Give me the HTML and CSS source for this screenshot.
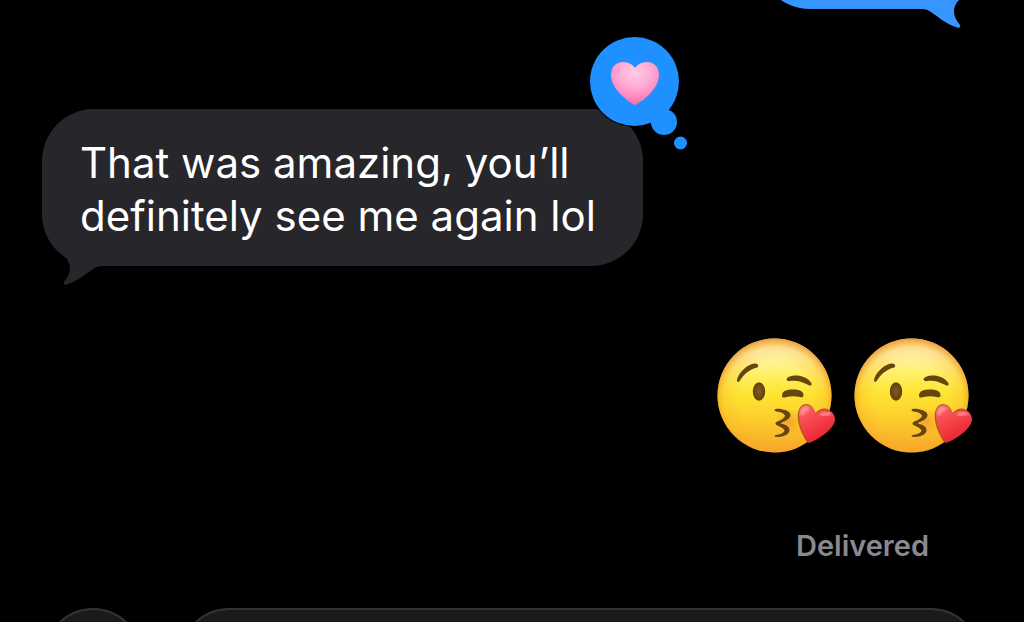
FILE: index.html
```html
<!DOCTYPE html>
<html lang="en">
<head>
    <meta charset="UTF-8">
    <meta name="viewport" content="width=device-width, initial-scale=1.0">
    <title>Messages</title>
    <link rel="stylesheet" href="styles.css">
</head>
<body>
    <!-- shared shapes -->
    <svg class="defs" aria-hidden="true">
        <defs>
            <linearGradient id="faceFill" x1="0" y1="0" x2="0" y2="1">
                <stop offset="0" stop-color="#fff0a8"/>
                <stop offset="0.12" stop-color="#fff6b8"/>
                <stop offset="0.3" stop-color="#ffef6a"/>
                <stop offset="0.48" stop-color="#fee531"/>
                <stop offset="0.75" stop-color="#fdc82c"/>
                <stop offset="1" stop-color="#f6a72b"/>
            </linearGradient>
            <radialGradient id="faceEdge" cx="0.5" cy="0.53" r="0.53">
                <stop offset="0.6" stop-color="#f7a325" stop-opacity="0"/>
                <stop offset="0.85" stop-color="#f7a325" stop-opacity="0.25"/>
                <stop offset="1" stop-color="#ec8e24" stop-opacity="0.85"/>
            </radialGradient>
            <radialGradient id="blush" cx="0.5" cy="0.5" r="0.5">
                <stop offset="0" stop-color="#f58a28" stop-opacity="0.6"/>
                <stop offset="1" stop-color="#f58a28" stop-opacity="0"/>
            </radialGradient>
            <radialGradient id="eyeFill">
                <stop offset="0" stop-color="#85591a"/>
                <stop offset="1" stop-color="#60400c"/>
            </radialGradient>
            <linearGradient id="redHeart" x1="0" y1="0" x2="0.5" y2="1">
                <stop offset="0" stop-color="#fb6c70"/>
                <stop offset="0.45" stop-color="#f8474d"/>
                <stop offset="1" stop-color="#e62431"/>
            </linearGradient>
            <radialGradient id="pinkHeart" cx="0.5" cy="0.25" r="0.72">
                <stop offset="0" stop-color="#ffcbe4"/>
                <stop offset="0.45" stop-color="#ffadd4"/>
                <stop offset="0.8" stop-color="#ff86c0"/>
                <stop offset="1" stop-color="#fb70b0"/>
            </radialGradient>
            <filter id="soft" x="-50%" y="-50%" width="200%" height="200%">
                <feGaussianBlur stdDeviation="1.5"/>
            </filter>
        </defs>
        <symbol id="tail" viewBox="0 0 44 46">
            <path d="M4 14C9 18 12 23 12 28C12 34 9 38 6 42C5 44 7 46 10 44C20 41 29 33 35 29C38 27 40 26 44 26V10H8Z"/>
        </symbol>
        <symbol id="kiss" viewBox="0 0 120 116">
            <circle cx="57.500" cy="57.500" r="57" fill="url(#faceFill)"/>
            <circle cx="57.500" cy="57.500" r="57" fill="url(#faceEdge)"/>
            <ellipse cx="72" cy="84" rx="14" ry="13" fill="url(#blush)"/>
            <g fill="#66450f">
                <path d="M20.300 43.500C19 41 23 34 28 30C33 26 38 24.500 40.500 26.200C42 28 41 29.500 39 29.800C31 32.500 27 36.500 23 42.500C22 44 21 44.200 20.300 43.500Z"/>
                <path d="M69.500 41.500C70 38 77 37 81 37.500C88 38.500 93 42 94.600 45.500C95 48 93 48 91.500 47C84 43.500 79 42 72 43.200C71 43.200 70 42.600 69.500 41.500Z"/>
                <path d="M65 57.500C65 53 70 51.500 76 51.500C82 51.500 86.500 53 86.500 57C86.500 60 84.500 59.500 82 58.700C78 58 73 58 69.500 59C67 60 65 60 65 57.500Z"/>
                <path d="M57.700 71.500C59 69.500 73.500 71.500 73.500 77C73.500 81 67 83.500 63.500 85.300C67 86.500 73 88 72.500 92.500C72 97.500 64 99.500 59 98.800C57 98.500 57.500 97 59 97C63 96.600 67 95 67.500 92.800C67.500 90 61 88 59 86.700C58 85.500 58.500 84.300 60 83.700C64 82.300 68.500 79.500 68 77.500C67 75 63 74 59.500 73.500C58 73.300 57.300 72.500 57.700 71.500Z"/>
            </g>
            <ellipse cx="42" cy="53.500" rx="6.200" ry="9.200" fill="url(#eyeFill)"/>
            <path d="M91 105.500C86 99 80.700 88 80.700 78C80.700 71 84 66 89 66C94 66 97 70 98.600 75C102 71 107 69.500 111.500 71.500C116.500 74 119 79 117.500 84C115 92 102 101 91 105.500Z" fill="#8f2d12" opacity="0.7"/>
            <path d="M92 105C87 98 82 87 82 78C82 71 85 67 89.500 67C94 67 97.500 71 99 76C102 72.500 107 71 111.500 72.500C116.500 74.500 119 79 117.500 84C115 92 103 100.500 92 105Z" fill="url(#redHeart)"/>
            <path d="M85 75Q86 70 90 71" stroke="#ff9d9c" stroke-width="4" stroke-linecap="round" fill="none" filter="url(#soft)"/>
            <path d="M105 77Q109 74 112 76" stroke="#ff8d8d" stroke-width="4" stroke-linecap="round" fill="none" filter="url(#soft)"/>
        </symbol>
    </svg>

    <main class="thread">
        <div class="bubble sent">
            <svg class="tail" aria-hidden="true"><use href="#tail"/></svg>
        </div>

        <div class="bubble received">
            <p>That was amazing, you’ll<br>definitely see me again lol</p>
            <svg class="tail" aria-hidden="true"><use href="#tail"/></svg>
            <svg class="reaction" viewBox="0 0 106 120" role="img" aria-label="Heart">
                <circle cx="48.500" cy="48.500" r="45.500" fill="#000"/>
                <g fill="#1e90ff">
                    <circle cx="48.500" cy="48.500" r="44.500"/>
                    <circle cx="78" cy="89" r="13"/>
                    <circle cx="94.500" cy="110" r="6.500"/>
                </g>
                <path d="M49 72C44 70 25 57 25 42C25 34 30 29 37 29C43 29 47 32 49 35C51 32 55 29 61 29C68 29 73 34 73 42C73 57 54 70 49 72Z" fill="url(#pinkHeart)"/>
            </svg>
        </div>

        <div class="emojis">
            <svg class="emoji" role="img" aria-label="Face blowing a kiss"><use href="#kiss"/></svg>
            <svg class="emoji" role="img" aria-label="Face blowing a kiss"><use href="#kiss"/></svg>
        </div>

        <p class="receipt">Delivered</p>
    </main>

    <form class="composer">
        <button type="button" class="add" aria-label="Add"></button>
        <input type="text" class="field" aria-label="Message">
    </form>
</body>
</html>
```
FILE: styles.css
```css
* {
    box-sizing: border-box;
}
body {
    margin: 0;
    height: 100vh;
    overflow: hidden;
    background: #000;
    color: #fff;
    font-family: Inter, "Liberation Sans", sans-serif;
}
p {
    margin: 0;
}
.defs {
    position: absolute;
    width: 0;
    height: 0;
}

/* conversation, scrolled so the first bubble is mostly out of view */
.thread {
    display: flex;
    flex-direction: column;
    margin-top: -95px;
    padding: 0 42px;
}
.bubble {
    position: relative;
    border-radius: 52px;
    font-size: 42px;
    line-height: 53px;
}
.sent {
    align-self: flex-end;
    width: 224px;
    height: 104px;
    background: #3795ff;
    color: #3795ff;
}
.received {
    align-self: flex-start;
    margin-top: 100px;
    padding: 27px 47px 24px 38px;
    background: #27262b;
}
.tail {
    position: absolute;
    left: 16px;
    bottom: -20px;
    width: 44px;
    height: 46px;
    fill: #27262b;
}
.sent .tail {
    left: auto;
    right: 16px;
    fill: #3795ff;
    transform: scaleX(-1);
}
.reaction {
    position: absolute;
    top: -76px;
    right: -49px;
    width: 106px;
    height: 120px;
}

.emojis {
    display: flex;
    justify-content: flex-end;
    gap: 17px;
    margin-top: 72px;
    padding-right: 8px;
}
.emoji {
    width: 120px;
    height: 116px;
}
.receipt {
    align-self: flex-end;
    margin-top: 75px;
    padding-right: 53px;
    color: #8a898f;
    font-size: 29px;
    font-weight: 600;
    line-height: 34px;
}

.composer {
    display: flex;
    gap: 38px;
    margin-top: 45px;
    padding: 0 44px;
}
.add,
.field {
    height: 98px;
    border: 2px solid #333;
    border-radius: 49px;
    background: #1a1a1a;
}
.add {
    flex: none;
    width: 98px;
}
.field {
    flex: 1;
    min-width: 0;
    padding: 0 36px;
    color: #fff;
    font: inherit;
    font-size: 42px;
}
```
